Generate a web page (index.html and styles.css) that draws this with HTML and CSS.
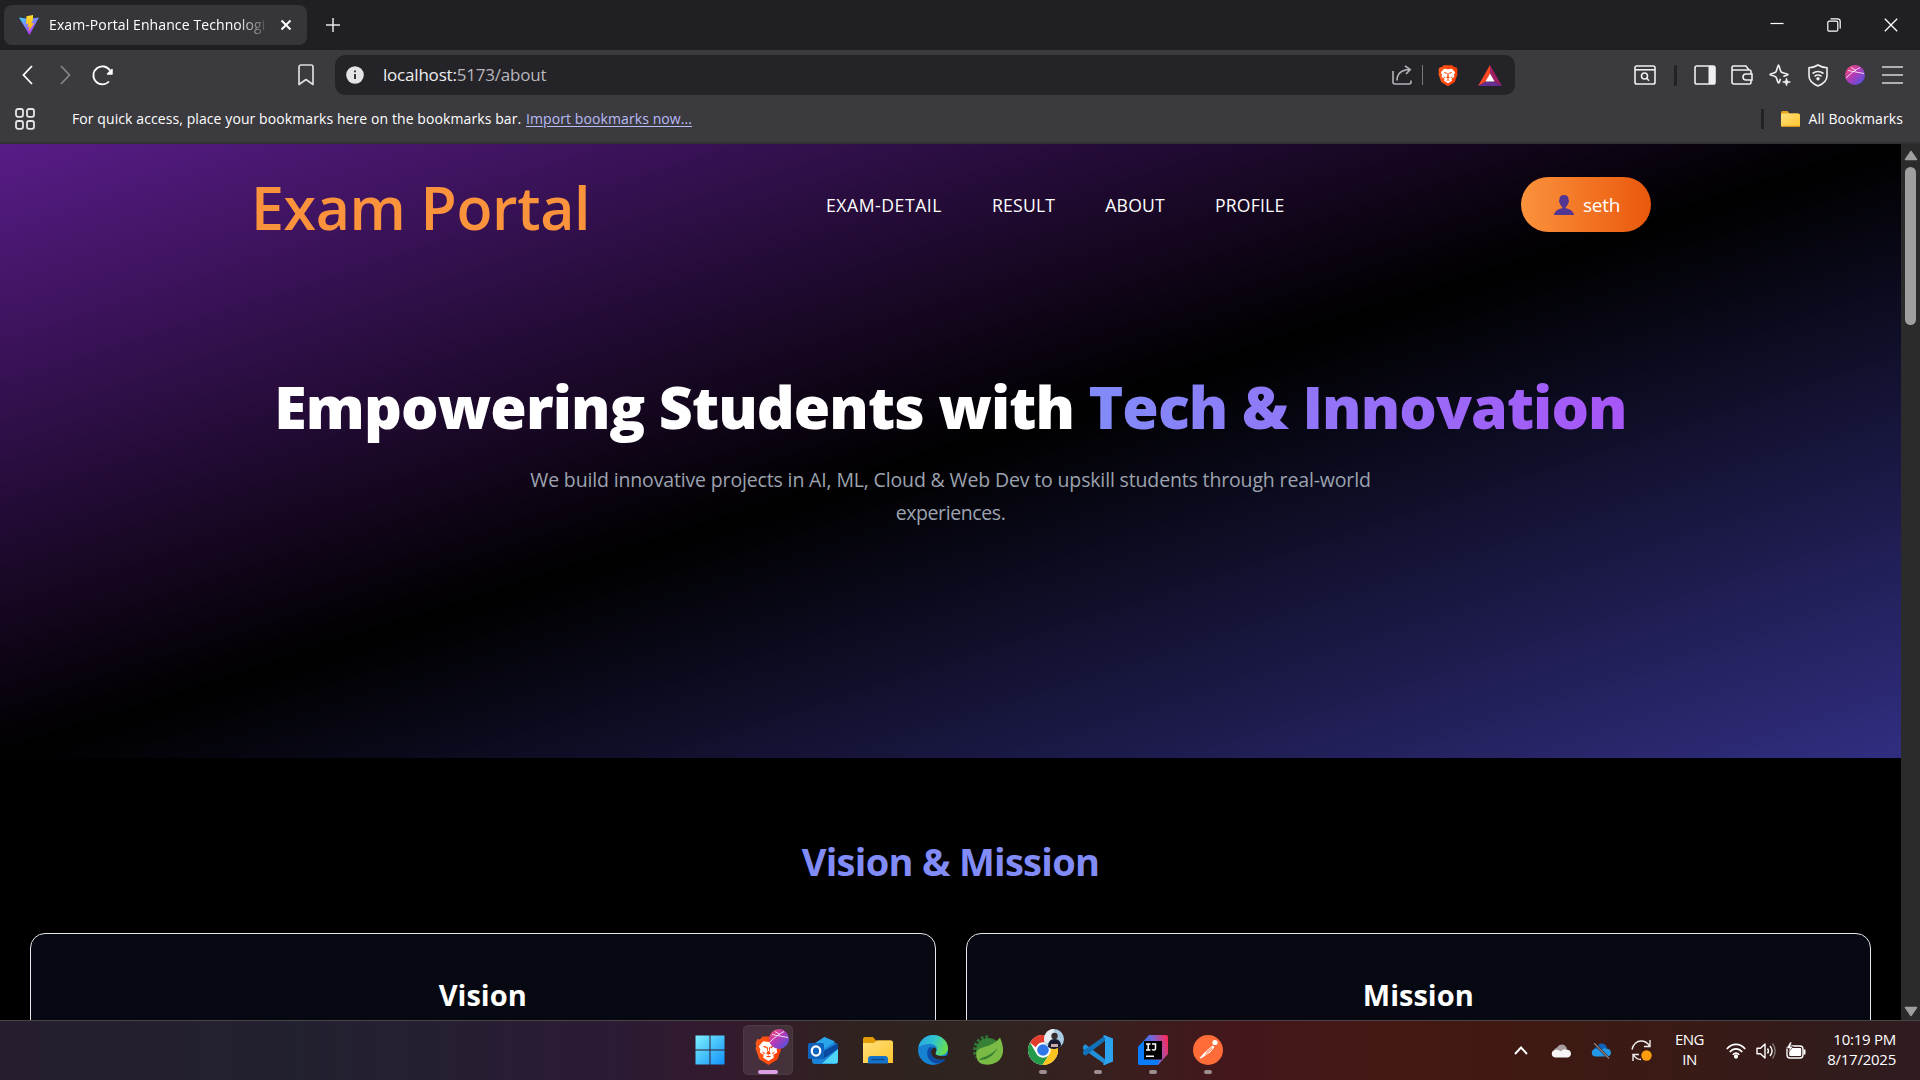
FILE: index.html
```
<!DOCTYPE html>
<html lang="en">
<head>
<meta charset="utf-8">
<title>Exam-Portal Enhance Technologies</title>
<link rel="stylesheet" href="styles.css">
</head>
<body>
<svg class="defs" width="0" height="0" aria-hidden="true">
  <defs>
    <linearGradient id="orb" x1="0" y1="0" x2="1" y2="1"><stop offset="0" stop-color="#ff4f6b"/><stop offset=".45" stop-color="#b73ab5"/><stop offset="1" stop-color="#3d55e8"/></linearGradient>
    <linearGradient id="lionFill" x1="0" y1="0" x2="1" y2="0"><stop offset="0" stop-color="#ff5a1a"/><stop offset="1" stop-color="#ff3a00"/></linearGradient>
    <linearGradient id="folderFill" x1="0" y1="0" x2="1" y2="1"><stop offset="0" stop-color="#ffe07a"/><stop offset="1" stop-color="#ffc52e"/></linearGradient>
    <linearGradient id="winFill" x1="0" y1="0" x2="1" y2="1"><stop offset="0" stop-color="#7df0fd"/><stop offset="1" stop-color="#1191fb"/></linearGradient>
  </defs>
  <symbol id="lion" viewBox="0 0 28 31">
    <path d="M8 1h12l3 3 2.500-.5L27.500 8l-1 3 1 2-4 11.500L14 30.500 4.500 24.500.500 13l1-2-1-3 2-4.500L5 4z" fill="url(#lionFill)"/>
    <path d="M8.500 6l5.500.8 5.500-.8 4.500 5-1.500 3.500.5 3-4 2.500.5 3L14 26.500 8.500 23l.5-3-4-2.500.5-3L4 11z" fill="#fff"/>
    <path d="M7.500 10.500l4.500.8-.5 2zM20.500 10.500l-4.500.8.5 2zM12 11.500l1 5-1.500 2L14 20l2.500-1.500-1.500-2 1-5-1.500 1v3.500h-1v-3.500zM7 16.500l3.500 1.500-1 1.500zM21 16.500L17.500 18l1 1.500zM11 22l3-1.200 3 1.200-3 .6z" fill="#ff4a0c"/>
  </symbol>
  <symbol id="orbIcon" viewBox="0 0 20 20">
    <circle cx="10" cy="10" r="10" fill="url(#orb)"/>
    <path d="M1 13C5 9 10 5 15 2.500M3 5.500l16 3M6 2.500l5 3" fill="none" stroke="#fff" stroke-opacity=".8" stroke-width="1"/>
  </symbol>
</svg>

<div class="tabstrip">
  <div class="tab">
    <svg width="20" height="20" viewBox="0 0 20 20"><defs><linearGradient id="v" x1="0" y1="0" x2=".6" y2="1"><stop offset="0" stop-color="#41d1ff"/><stop offset="1" stop-color="#bd34fe"/></linearGradient><linearGradient id="b" x1="0" y1="0" x2="0" y2="1"><stop offset="0" stop-color="#ffdd35"/><stop offset="1" stop-color="#ffa800"/></linearGradient></defs><path d="M0 2.500l10 1.500 10-1.500L10.500 20z" fill="url(#v)"/><path d="M14 0L7.500 1.300 7 9l2.500-.5L8.500 12l2-.5-.8 5L15 8l-2.700.500L14 4.500z" fill="url(#b)"/></svg>
    <span class="tab-title">Exam-Portal Enhance Technologi</span>
    <svg class="tab-close" width="12" height="12" viewBox="0 0 12 12"><path d="M1.500 1.500l9 9M10.500 1.500l-9 9" stroke="#fff" stroke-width="2"/></svg>
  </div>
  <svg class="newtab" width="14" height="14" viewBox="0 0 14 14"><path d="M7 0v14M0 7h14" stroke="#e6e5e9" stroke-width="1.500"/></svg>
  <div class="win-controls">
    <svg width="14" height="14" viewBox="0 0 14 14"><path d="M.5 5.500h13" stroke="#fff" stroke-width="1.200"/></svg>
    <svg width="14" height="14" viewBox="0 0 14 14" fill="none" stroke="#fff" stroke-width="1.200"><rect x=".8" y="3.200" width="10" height="10" rx="1.500"/><path d="M3.500.8h7a2.700 2.700 0 0 1 2.700 2.700v7"/></svg>
    <svg width="14" height="14" viewBox="0 0 14 14"><path d="M.8.8l12.400 12.400M13.200.8L.8 13.200" stroke="#fff" stroke-width="1.300"/></svg>
  </div>
</div>

<div class="toolbar">
  <div class="nav-icons">
    <svg width="11" height="20" viewBox="0 0 11 20"><path d="M10 1L1.500 10 10 19" fill="none" stroke="#fff" stroke-width="1.800"/></svg>
    <svg width="11" height="20" viewBox="0 0 11 20"><path d="M1 1l8.500 9L1 19" fill="none" stroke="#858489" stroke-width="1.800"/></svg>
    <svg width="22" height="22" viewBox="0 0 22 22"><path d="M17 17.500A9 9 0 1 1 18 6.500" fill="none" stroke="#fff" stroke-width="1.800"/><path d="M20 5.500v4.500h-4.500z" fill="#fff" stroke="#fff" stroke-width="1.500" stroke-linejoin="round"/></svg>
  </div>
  <svg class="page-mark" width="16" height="22" viewBox="0 0 16 22"><path d="M1 20V3a2 2 0 0 1 2-2h10a2 2 0 0 1 2 2v17.500L8 15.500 1 20.500z" fill="none" stroke="#dddce0" stroke-width="1.700" stroke-linejoin="round"/></svg>
  <div class="omnibox">
    <svg width="18" height="18" viewBox="0 0 18 18"><circle cx="9" cy="9" r="8.800" fill="#e4e3e8"/><path d="M9 8v5M9 4.500v1.800" stroke="#242328" stroke-width="1.800"/></svg>
    <span class="url">localhost:<span class="url-path">5173/about</span></span>
    <svg class="share" width="20" height="20" viewBox="0 0 20 20" fill="none" stroke="#b5b4b9" stroke-width="1.600"><path d="M1 6v11a2 2 0 0 0 2 2h14a2 2 0 0 0 2-2v-1.500"/><path d="M5 15.500c0-6 4-10.500 12.500-11M13 .8L18.200 4.500 14 9"/></svg>
    <span class="omni-sep"></span>
    <svg class="shield" width="20" height="23"><use href="#lion"/></svg>
    <svg class="bat" width="24" height="21" viewBox="0 0 24 21"><path d="M12 0L0 21l8-4.500 4-8z" fill="#ff4724"/><path d="M12 0l12 21-8-4.500-4-8z" fill="#9e1f63"/><path d="M0 21h24l-8-4.500H8z" fill="#662d91"/><path d="M12 8.500l4.500 8h-9z" fill="#fff"/></svg>
  </div>
  <div class="tools">
    <svg width="22" height="20" viewBox="0 0 22 20" fill="none" stroke="#efeef2" stroke-width="1.600"><rect x="1" y="1" width="20" height="18" rx="1.800"/><path d="M1 4.800h20"/><circle cx="10.500" cy="11" r="3"/><path d="M12.500 13l2.500 2.800"/></svg>
    <span class="tool-sep"></span>
    <svg width="22" height="20" viewBox="0 0 22 20"><rect x="1" y="1" width="20" height="18" rx="1.800" fill="none" stroke="#efeef2" stroke-width="1.600"/><path d="M14.500 1H20a1 1 0 0 1 1 1v16a1 1 0 0 1-1 1h-5.500z" fill="#efeef2"/></svg>
    <svg class="wallet" width="22" height="20" viewBox="0 0 22 20" fill="none" stroke="#efeef2" stroke-width="1.600"><path d="M20 9V6.500a1.500 1.500 0 0 0-1.500-1.500H1V17a2 2 0 0 0 2 2h15.500a1.500 1.500 0 0 0 1.500-1.500V15M1 5V2.500A1.500 1.500 0 0 1 2.500 1H15l3 4"/><path d="M21 9h-6a3 3 0 0 0 0 6h6z"/></svg>
    <svg width="22" height="22" viewBox="0 0 22 22"><path d="M9.500 1c1 0 1.300 5.800 2.800 7.200C13.800 9.600 19 9.500 19 10.500s-2 .8-4 1.700M9.500 1C8.500 1 8.200 6.800 6.700 8.200 5.200 9.600 1 9.500 1 10.500s4.200.9 5.700 2.300C8.200 14.200 8.500 19 9.500 19s1-1.500 1.700-3.500" fill="none" stroke="#efeef2" stroke-width="1.700" stroke-linecap="round"/><path d="M17.500 14l1 3 3 1-3 1-1 3-1-3-3-1 3-1z" fill="#efeef2" stroke="#efeef2" stroke-width=".6"/></svg>
    <svg width="20" height="23" viewBox="0 0 20 23" fill="none" stroke="#efeef2" stroke-width="1.600"><path d="M10 1c3 2 6 2.600 9 2.700v8c0 4.500-3.500 8-9 10.300-5.500-2.300-9-5.800-9-10.300v-8C4 3.600 7 3 10 1z"/><path d="M4.500 9.500c3.500-2.600 7.500-2.600 11 0M6.500 12.300c2.200-1.600 4.800-1.600 7 0"/><circle cx="10" cy="14.800" r=".9" fill="#efeef2"/></svg>
    <svg width="20" height="20"><use href="#orbIcon"/></svg>
    <svg width="21" height="18" viewBox="0 0 21 18"><path d="M0 1h21M0 9h21M0 17h21" stroke="#d8d7db" stroke-width="1.700"/></svg>
  </div>
</div>

<div class="bookmarks">
  <svg width="20" height="22" viewBox="0 0 20 22" fill="none" stroke="#e6e5e9" stroke-width="1.800"><rect x="1" y="1" width="7" height="7.800" rx="2"/><rect x="12" y="1" width="7" height="7.800" rx="2"/><rect x="1" y="13" width="7" height="7.800" rx="2"/><rect x="12" y="13" width="7" height="7.800" rx="2"/></svg>
  <span class="bm-text">For quick access, place your bookmarks here on the bookmarks bar.</span>
  <a class="bm-link">Import bookmarks now...</a>
  <span class="bm-sep"></span>
  <svg class="bm-folder" width="19" height="16" viewBox="0 0 19 16"><path d="M0 1.500A1.500 1.500 0 0 1 1.500 0h5L8.500 2.500H17V8H0z" fill="#e0a61c"/><rect y="2.500" width="19" height="13.500" rx="1.500" fill="url(#folderFill)"/><path d="M.5 15.300h18" stroke="#c98a17"/></svg>
  <span class="bm-all">All Bookmarks</span>
</div>

<div class="viewport">
  <main class="page">
    <section class="hero">
      <header class="site-header">
        <div class="brand">Exam Portal</div>
        <nav class="site-nav"><a class="wide">EXAM-DETAIL</a><a>RESULT</a><a>ABOUT</a><a>PROFILE</a></nav>
        <button class="user-btn">
          <svg width="20" height="20" viewBox="0 0 20 20"><path d="M10 0c3.200 0 4.600 2 4.600 4.500 0 1 .6 1.300.4 2.200s-.8 1-1 1.800c-.4 2-1.500 3-2.300 3.500v1.200c3.500.8 7.300 1.800 8.300 6.800H0c1-5 4.800-6 8.300-6.800V12C7.500 11.500 6.400 10.500 6 8.500c-.2-.8-.8-.9-1-1.800s.4-1.200.4-2.200C5.400 2 6.800 0 10 0z" fill="#533594"/></svg>
          <span>seth</span>
        </button>
      </header>
      <div class="hero-copy">
        <h1>Empowering Students with <span class="accent">Tech &amp; Innovation</span></h1>
        <p>We build innovative projects in AI, ML, Cloud &amp; Web Dev to upskill students through real-world <span class="last">experiences.</span></p>
      </div>
    </section>
    <section class="purpose">
      <h2>Vision &amp; Mission</h2>
      <div class="cards">
        <article class="card"><h3>Vision</h3></article>
        <article class="card"><h3>Mission</h3></article>
      </div>
    </section>
  </main>
  <div class="scrollbar">
    <svg width="14" height="11" viewBox="0 0 14 11"><path d="M7 1.500L12.500 9.500h-11z" fill="#9f9f9f" stroke="#9f9f9f" stroke-width="1.500" stroke-linejoin="round"/></svg>
    <span class="thumb"></span>
    <svg width="14" height="11" viewBox="0 0 14 11"><path d="M7 9.500L12.500 1.500h-11z" fill="#9f9f9f" stroke="#9f9f9f" stroke-width="1.500" stroke-linejoin="round"/></svg>
  </div>
</div>

<footer class="taskbar">
  <div class="apps">
    <div class="app first"><svg width="30" height="30" viewBox="0 0 30 30"><path d="M.5.5h14v14H.5zM15.500.5h14v14h-14zM.5 15.500h14v14H.5zM15.500 15.500h14v14h-14z" fill="url(#winFill)"/></svg></div>
    <div class="app active"><svg width="27" height="31"><use href="#lion"/></svg><svg class="badge" width="20" height="20"><use href="#orbIcon"/></svg><span class="mark"></span></div>
    <div class="app"><svg width="30" height="30" viewBox="0 0 30 30"><path d="M16.500 2L4 10v16a3 3 0 0 0 3 3h20a3 3 0 0 0 3-3V9.500z" fill="#1a83d8"/><path d="M16.500 2L6 9l10 5 11-7.500z" fill="#2aa5ea"/><path d="M30 8v6L15 24l-3-6z" fill="#0a49a0"/><path d="M30 14v12a2.500 2.500 0 0 1-2.500 2.500H14z" fill="#4fd6f7"/><rect y="8" width="16" height="16" rx="1.500" fill="#0f62bd"/><ellipse cx="8" cy="16" rx="4.200" ry="4.700" fill="none" stroke="#fff" stroke-width="2.300"/></svg></div>
    <div class="app"><svg width="30" height="30" viewBox="0 0 30 30"><path d="M0 4a2 2 0 0 1 2-2h8l3 3.500h15V12H0z" fill="#e29c06"/><path d="M0 8l11 0 3-2.500h14a2 2 0 0 1 2 2V28H0z" fill="url(#folderFill)"/><path d="M5 28.500V24a3 3 0 0 1 3-3h14a3 3 0 0 1 3 3v4.500z" fill="#1673c9"/><path d="M8.500 24.500h13" stroke="#0b4b90" stroke-width="1.500"/></svg></div>
    <div class="app"><svg width="30" height="30" viewBox="0 0 30 30"><defs><linearGradient id="eg" x1="0" y1=".2" x2="1" y2=".5"><stop offset="0" stop-color="#2aa5e5"/><stop offset=".5" stop-color="#30c5cf"/><stop offset="1" stop-color="#68df4b"/></linearGradient></defs><circle cx="15" cy="15" r="15" fill="#1782d1"/><path d="M.5 12C2 5 8 0 15 0c8.500 0 15 6 15 13 0 5-4 7.500-8 7.500-4.500 0-5.500-1.800-4-3.500 3-5-2-9-8-8C5.500 9.500 2 11 .5 12z" fill="url(#eg)"/><path d="M10.500 13c-4 8 2 15.500 9 15.500 3.500 0 7-2 8.500-5-8 3.500-15-1-15-6.500 0-2 .7-3.200 2-4.500-1.500-.6-3.300-.4-4.500.500z" fill="#0b4ba4"/><path d="M13 17c0 5.500 7 10 15 6.500l2-3.500c-2 1-4 1-6 1-5.500 0-7.500-2-6-4 .8-1.800.4-3.500-1.500-4.700C14 13.500 13 15 13 17z" fill="#2f2422"/></svg></div>
    <div class="app"><svg width="30" height="30" viewBox="0 0 30 30"><path d="M15 2.200A12.800 12.800 0 0 0 4 22" fill="none" stroke="#2d7436" stroke-width="4" stroke-dasharray="2.600 1.800"/><circle cx="15.500" cy="15.500" r="12.500" fill="#368136"/><path d="M4 16c3-5 15-3 23-13.500 4 9 4 16 .5 21-4 6-14 8-20.500 4.500C3 25 2.500 19 4 16z" fill="#79bb44"/><path d="M6 25c7 .5 15-4 18.500-12-4.500 6-11 8-17 10.500z" fill="#377d32"/></svg></div>
    <div class="app"><svg width="30" height="30" viewBox="0 0 30 30"><circle cx="15" cy="15" r="15" fill="#fff"/><path d="M2 7.500A15 15 0 0 1 28 7.500H15a7.500 7.500 0 0 0-7 5z" fill="#e33b2e"/><path d="M2 7.500A15 15 0 0 0 14.500 30l7-11.200a7.500 7.500 0 0 1-13 0z" fill="#249a48"/><path d="M28 7.500A15 15 0 0 1 14.500 30l7-11.200a7.500 7.500 0 0 0-6.500-11.300z" fill="#fcc41f"/><circle cx="15" cy="15" r="7.400" fill="#fff"/><circle cx="15" cy="15" r="5.800" fill="#2f76e8"/></svg><svg class="badge" width="20" height="20" viewBox="0 0 20 20"><circle cx="10" cy="10" r="10" fill="#a8cce3"/><path d="M2 4a10 10 0 0 1 8-4v14H1A10 10 0 0 1 2 4z" fill="#e4eef2"/><circle cx="10.500" cy="7" r="3.200" fill="#3b2e31"/><path d="M4 18c0-5 2-8 6.500-8s6.500 3 6.500 7a10 10 0 0 1-13 1z" fill="#171a30"/><path d="M7 15h7v3H7z" fill="#caa9a5"/></svg><span class="mark"></span></div>
    <div class="app"><svg width="30" height="30" viewBox="0 0 30 30"><path d="M0 11l2.500-1.800L23 25v5L0 14z" fill="#2190d9"/><path d="M0 19l2.500 1.800L23 5V0L0 16z" fill="#1272b8"/><path d="M21.500.2L30 3.500v23L21.500 30c-.8 0-1.500-.5-1.500-1l2-2V3l-2-2c0-.5.700-.8 1.500-.8z" fill="#2ba3ee"/></svg><span class="mark"></span></div>
    <div class="app"><svg width="30" height="30" viewBox="0 0 30 30"><defs><linearGradient id="ij" x1=".1" y1=".4" x2="1" y2=".2"><stop offset="0" stop-color="#0b7dfb"/><stop offset=".5" stop-color="#7a64d2"/><stop offset="1" stop-color="#fe2858"/></linearGradient></defs><path d="M11 0h17a2 2 0 0 1 2 2v17l-9 10a3 3 0 0 1-2 1H2a2 2 0 0 1-2-2V12z" fill="url(#ij)"/><path d="M0 12l6-6v19h16l-3 5H2a2 2 0 0 1-2-2z" fill="#087cfa"/><rect x="6" y="6" width="18" height="18.500" fill="#000"/><path d="M8 9h4.500M10.200 9v6M8 15h4.500M14 9h3.500v4.500c0 1.500-2 2-3.500 1M8 21.300h8" stroke="#fff" stroke-width="1.500" fill="none"/></svg><span class="mark"></span></div>
    <div class="app"><svg width="30" height="30" viewBox="0 0 30 30"><circle cx="15" cy="15" r="15" fill="#ff6c37"/><circle cx="22" cy="7.500" r="2.600" fill="#fff"/><path d="M19.500 10.500l2 1.500-4.500 5.500L8 23.500 6.500 23l5-5.500z" fill="#fff"/><path d="M13 17.500l6-5M12 20l7-6" stroke="#ff6c37" stroke-width=".8"/></svg><span class="mark"></span></div>
  </div>
  <div class="tray">
    <svg class="chev" width="14" height="9" viewBox="0 0 14 9"><path d="M1 8l6-6.500L13 8" fill="none" stroke="#fff" stroke-width="1.900"/></svg>
    <svg class="cloud" width="20" height="14" viewBox="0 0 20 14"><path d="M3 10C1 5 6 4 6.500 3 9-1 15 0 16 5z" fill="#a79f9f"/><path d="M4 13.500a3.800 3.800 0 0 1 0-7.500c3-.5 4 .5 6 1.200C12 5 14 5 15.500 5.500c3 .2 4.500 2 4.500 4.200a3.800 3.800 0 0 1-4 3.800z" fill="#f6f4f4"/></svg>
    <svg class="cloud" width="20" height="16" viewBox="0 0 20 16"><path d="M3 10C1 5 6 4 6.500 3 9-1 15 0 16 5z" fill="#0e63bd"/><path d="M4 13.500a3.800 3.800 0 0 1 0-7.500c3-.5 4 .5 6 1.200C12 5 14 5 15.500 5.500c3 .2 4.500 2 4.500 4.200a3.800 3.800 0 0 1-4 3.800z" fill="#2197e5"/><path d="M3 0l15 15.500" stroke="#3a1a14" stroke-width="2.400"/><path d="M3 0l15 15.500" stroke="#8e8684" stroke-width="1.200"/></svg>
    <svg class="sync" width="21" height="21" viewBox="0 0 21 21"><path d="M1 9.500C2 4 6 1 10 1c4 0 6.500 1.500 8.500 5M19 0v6.500h-6M10 19.500c-3.500 0-6-2-7.500-4.500M2 21v-6.500h6" fill="none" stroke="#eee" stroke-width="1.400"/><circle cx="15.500" cy="15.500" r="5.200" fill="#ff9c0d"/></svg>
    <div class="lang"><span>ENG</span><span>IN</span></div>
    <svg class="wifi" width="20" height="16" viewBox="0 0 20 16" fill="none" stroke="#fff" stroke-width="1.700"><path d="M.8 6C6-.2 14-.2 19.200 6M3.800 9c3.500-4.200 8.900-4.200 12.400 0M6.800 11.800c2-2.200 4.400-2.200 6.400 0"/><circle cx="10" cy="13.500" r="1.300" fill="#fff"/></svg>
    <svg class="vol" width="20" height="18" viewBox="0 0 20 18" fill="none" stroke="#fff" stroke-width="1.400"><path d="M1 6.200h3.500L9 2v14l-4.500-4.200H1z" stroke-linejoin="round"/><path d="M11.500 6.500c1.200 1.500 1.200 3.500 0 5M14 4c2.500 3 2.500 7 0 10"/><path d="M16.500 1.500c3.500 4.500 3.500 10.500 0 15" stroke="#817572"/></svg>
    <svg class="batt" width="20" height="17" viewBox="0 0 20 17"><rect x="1" y="4" width="16" height="12" rx="3" fill="none" stroke="#fff" stroke-width="1.400"/><rect x="3.200" y="6" width="12" height="8" rx="1" fill="#fff"/><path d="M18.500 7.500v5" stroke="#fff" stroke-width="2"/><path d="M4 0L.5 6.500h3L2 11l5-6.500H4.500L6 0z" fill="#fff" stroke="#361a18" stroke-width=".6"/></svg>
    <div class="clock"><span>10:19 PM</span><span>8/17/2025</span></div>
  </div>
</footer>
</body>
</html>
```
FILE: styles.css
```
* { box-sizing: border-box; }
html, body { margin: 0; height: 1080px; overflow: hidden; }
body {
  display: flex;
  flex-direction: column;
  background: #000;
  color: #fff;
  font-family: "Open Sans", "Noto Sans", sans-serif;
}
svg { display: block; flex: none; }
.defs { position: absolute; }
h1, h2, h3, p { margin: 0; }

/* Tab strip */
.tabstrip { height: 50px; flex: none; display: flex; align-items: center; background: #201f24; padding-left: 4px; }
.tab { width: 303px; height: 40px; display: flex; align-items: center; padding-left: 15px; border-radius: 8px; background: #363539; }
.tab-title {
  width: 218px; margin-left: 10px; padding-bottom: 1px; overflow: hidden; white-space: nowrap;
  font-size: 14px; letter-spacing: .1px;
  -webkit-mask-image: linear-gradient(90deg, #000 86%, rgba(0,0,0,.1));
  mask-image: linear-gradient(90deg, #000 86%, rgba(0,0,0,.1));
}
.tab-close { margin-left: 13px; }
.newtab { margin-left: 19px; }
.win-controls { margin-left: auto; display: flex; gap: 43px; padding-right: 22px; }

/* Toolbar */
.toolbar { height: 45px; flex: none; display: flex; align-items: center; background: #3b3a3e; padding: 5px 17px 0 22px; }
.nav-icons { display: flex; align-items: center; gap: 27px; }
.nav-icons svg:last-child { margin-left: -6px; }
.page-mark { margin-left: 184px; }
.omnibox { width: 1180px; height: 40px; margin-left: 21px; display: flex; align-items: center; padding: 0 13px 0 11px; border-radius: 10px; background: #242328; }
.url { margin-left: 18px; font-size: 17px; letter-spacing: -.2px; line-height: 24px; padding: 0 0 1px 1px; color: #eeedf1; }
.url-path { color: #b8b7bc; }
.share { margin-left: auto; }
.omni-sep { width: 1px; height: 20px; margin: 0 15px 0 10px; background: #77767b; }
.bat { margin-left: 20px; }
.tools { margin-left: auto; display: flex; align-items: center; gap: 16px; }
.tools svg:nth-last-child(-n+3) { margin-left: 1px; }
.tools .wallet { margin-left: -1px; }
.tool-sep { width: 3px; height: 21px; border-radius: 2px; background: #222126; margin: 0 1px 0 2px; }

/* Bookmarks bar */
.bookmarks { height: 49px; flex: none; display: flex; align-items: center; background: #3b3a3e; border-bottom: 2px solid #302f34; padding: 0 17px 0 15px; font-size: 14px; letter-spacing: .09px; line-height: 20px; }
.bm-text { width: 447px; margin-left: 37px; white-space: nowrap; }
.bm-link { margin-left: 7px; color: #b9bbf6; text-decoration: underline; text-underline-offset: 2px; white-space: nowrap; }
.bm-sep { width: 3px; height: 20px; margin-left: auto; background: #222126; }
.bm-folder { margin-left: 17px; }
.bm-all { margin-left: 9px; }

/* Page */
.viewport { height: 876px; flex: none; display: flex; }
.page { width: 1901px; height: 876px; overflow: hidden; background: #000; }
.hero { height: 614px; background: linear-gradient(to bottom right, #581c87, #000, #312e81); }
.site-header { width: 1403px; height: 122px; margin: 0 auto; display: flex; align-items: center; padding-left: 2px; }
.brand { width: 360px; margin-top: 4px; color: #fb923c; font-size: 59px; font-weight: 600; letter-spacing: -.35px; line-height: 75px; white-space: nowrap; }
.site-nav { display: flex; gap: 50px; margin-left: 215px; font-size: 17.600px; letter-spacing: .2px; line-height: 28px; }
.site-nav .wide { letter-spacing: .55px; }
.user-btn { width: 130px; height: 55px; margin: 0 1px 2px auto; display: flex; align-items: center; justify-content: center; gap: 9px; border: 0; border-radius: 28px; background: linear-gradient(90deg, #fb923c, #ea580c); color: #fff; font: 500 19px/28px "Open Sans", sans-serif; letter-spacing: -.25px; padding: 2px 5px 0 7px; }
.hero-copy { padding-top: 109px; text-align: center; }
.hero h1 { font-size: 59px; font-weight: 800; line-height: 62px; letter-spacing: -.92px; white-space: nowrap; }
.accent { color: transparent; background: linear-gradient(90deg, #818cf8, #a855f7); -webkit-background-clip: text; background-clip: text; }
.hero p { width: 880px; margin: 26px auto 0; color: #9ca3af; font-size: 19.500px; letter-spacing: -.15px; line-height: 33px; }
.last { letter-spacing: -.4px; }
.purpose { padding: 80px 30px 0; text-align: center; }
.purpose h2 { color: #818cf8; font-size: 38px; font-weight: 700; letter-spacing: -.7px; line-height: 46px; }
.cards { display: grid; grid-template-columns: 1fr 1fr; gap: 30px; margin-top: 49px; }
.card { height: 200px; border: 1px solid #e5e7eb; border-radius: 15px; background: #060911; padding-top: 41px; }
.card h3 { font-size: 29px; font-weight: 700; line-height: 40px; letter-spacing: 0; }

.scrollbar { width: 19px; display: flex; flex-direction: column; align-items: center; padding: 6px 0 3px; background: #2b2b2b; }
.thumb { width: 11px; height: 158px; margin: 6px 0 auto; border-radius: 6px; background: #9f9f9f; }

/* Taskbar */
.taskbar {
  height: 60px; flex: none; display: flex; justify-content: space-between; padding-left: 684px; border-top: 1px solid #494345;
  background: linear-gradient(90deg, #261e2e 0, #222130 300px, #2b1b34 612px, #341a2c 735px, #30231f 857px, #2f2420 980px, #38201f 1100px, #43171b 1225px, #441813 1408px, #3a1a14 1653px, #2e1c20 1920px);
}
.apps { display: flex; gap: 5px; padding: 4px 0 5px; }
.app { position: relative; width: 50px; height: 50px; display: flex; align-items: center; justify-content: center; border-radius: 5px; }
.first { width: 54px; padding-right: 2px; }
.app.active { background: rgba(255,255,255,.09); box-shadow: inset 0 0 0 1px rgba(255,255,255,.05); }
.badge { position: absolute; top: 4px; right: 4px; }
.mark { position: absolute; bottom: 1px; left: 21px; width: 8px; height: 4px; border-radius: 2px; background: #9b8d90; }
.active .mark { left: 15px; width: 20px; background: #dd9fe3; }
.tray { display: flex; align-items: center; padding-right: 24px; font-size: 15px; line-height: 20px; }
.chev { margin-right: 23px; }
.cloud { margin-right: 20px; }
.sync { margin-right: 23px; }
.lang, .clock { display: flex; flex-direction: column; padding-bottom: 4px; }
.lang { width: 29px; align-items: center; letter-spacing: -.5px; }
.wifi { margin-left: 22px; }
.vol { margin-left: 10px; }
.batt { margin-left: 10px; }
.clock { width: 90px; align-items: flex-end; letter-spacing: -.25px; }
```
